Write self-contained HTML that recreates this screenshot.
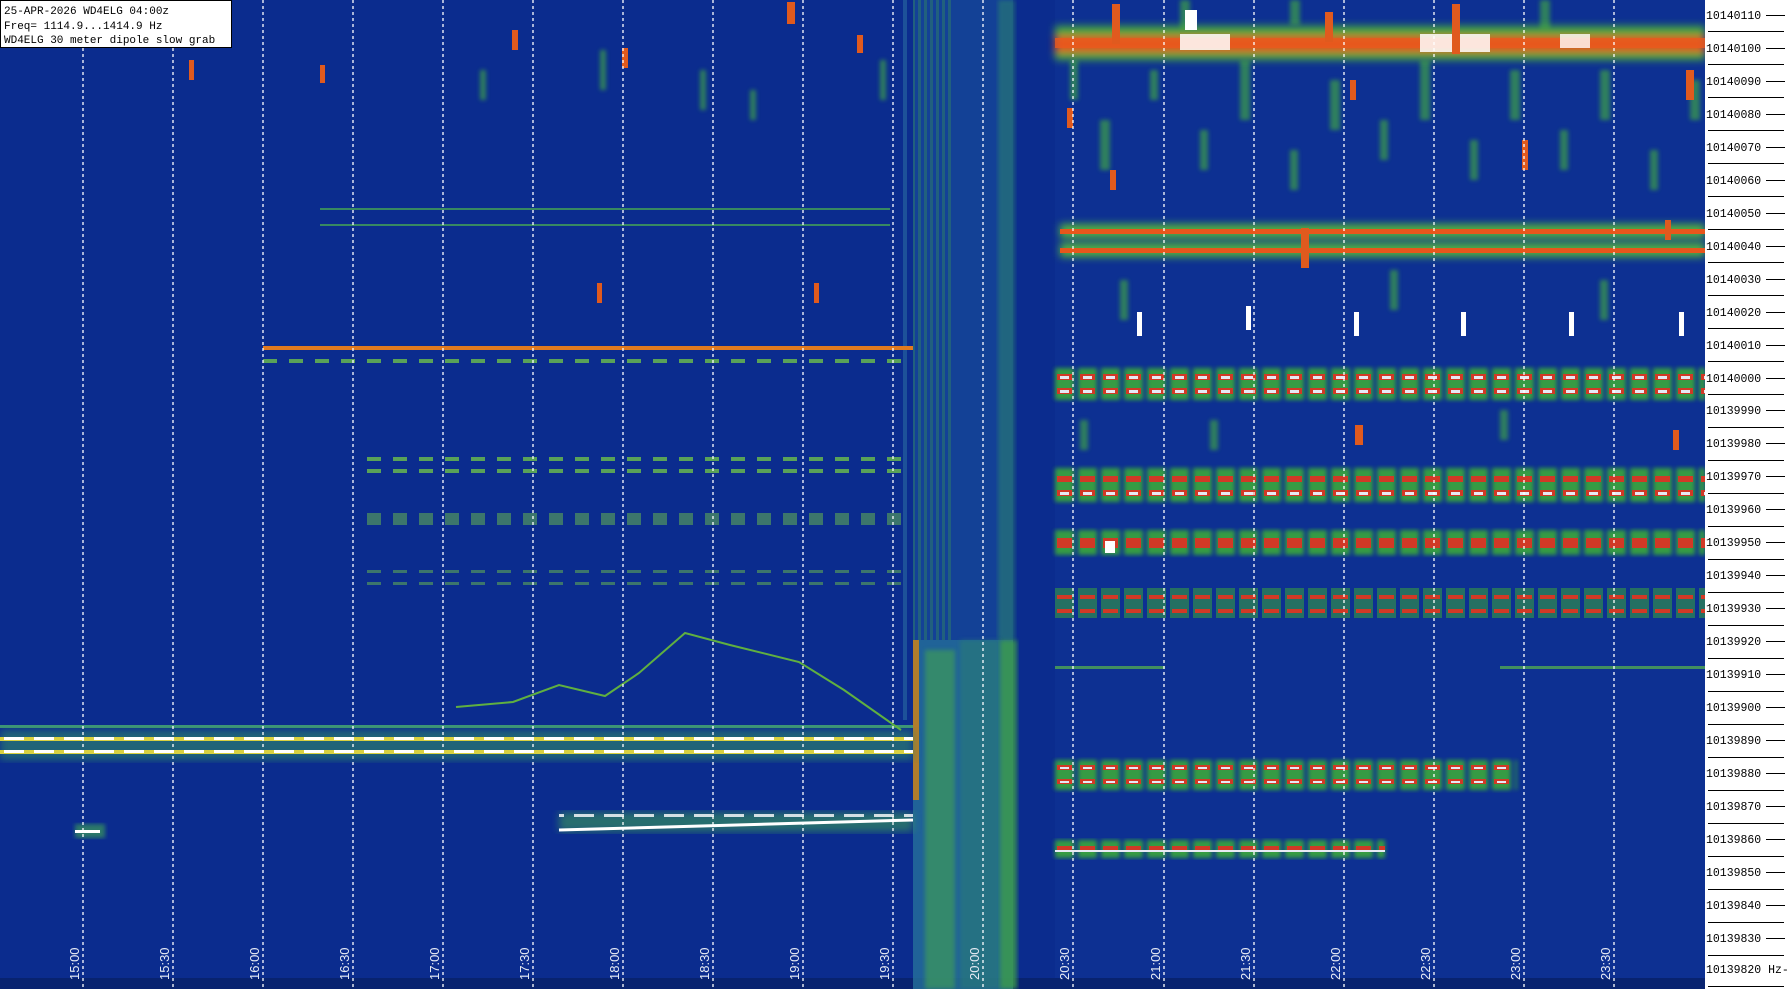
<!DOCTYPE html>
<html><head><meta charset="utf-8"><style>
html,body{margin:0;padding:0;background:#fff;width:1789px;height:989px;overflow:hidden}
svg{display:block}
.mono{font-family:"Liberation Mono",monospace}
</style></head><body>
<svg width="1789" height="989" viewBox="0 0 1789 989" xmlns="http://www.w3.org/2000/svg">
<defs>
<filter id="blur2"><feGaussianBlur stdDeviation="2"/></filter>
<filter id="blur4"><feGaussianBlur stdDeviation="4"/></filter>
<pattern id="dashL" x="0" y="0" width="30" height="30" patternUnits="userSpaceOnUse">
<rect x="4" y="0" width="20" height="30" fill="#fff"/></pattern>
<pattern id="blkR" x="1055" y="0" width="23" height="40" patternUnits="userSpaceOnUse">
<rect x="2" y="0" width="15" height="40" fill="#e83a1a"/></pattern>
<pattern id="blkG" x="1055" y="0" width="23" height="40" patternUnits="userSpaceOnUse">
<rect x="0" y="0" width="19" height="40" fill="#3aa83a"/></pattern>
<pattern id="blkW" x="1055" y="0" width="23" height="40" patternUnits="userSpaceOnUse">
<rect x="5" y="0" width="9" height="40" fill="#fff"/></pattern>
<pattern id="dashS" x="0" y="0" width="26" height="10" patternUnits="userSpaceOnUse">
<rect x="3" y="0" width="14" height="10" fill="#6cc04a"/></pattern>
<pattern id="vstr" x="0" y="0" width="6" height="40" patternUnits="userSpaceOnUse">
<rect x="0" y="0" width="3" height="40" fill="#3a9a50"/></pattern>
</defs>
<rect x="0" y="0" width="1705" height="989" fill="#0b2c8e"/>
<rect x="1055" y="0" width="650" height="989" fill="#0d3092"/>
<rect x="0" y="978" width="1705" height="11" fill="#082370"/>

<!-- green vertical region -->
<rect x="913" y="0" width="100" height="989" fill="#1d5aa0" opacity="0.45"/>
<rect x="913" y="0" width="40" height="640" fill="url(#vstr)" opacity="0.35"/>
<rect x="998" y="0" width="17" height="640" fill="#2e8a6a" opacity="0.5" filter="url(#blur2)"/>
<rect x="913" y="640" width="100" height="349" fill="#2a7a9a" opacity="0.6"/>
<rect x="925" y="650" width="30" height="339" fill="#3c9a5a" opacity="0.7" filter="url(#blur2)"/>
<rect x="960" y="640" width="40" height="349" fill="#2c8070" opacity="0.5" filter="url(#blur2)"/>
<rect x="1000" y="640" width="17" height="349" fill="#3e9e4a" opacity="0.8" filter="url(#blur2)"/>
<rect x="913" y="640" width="6" height="160" fill="#c08020" opacity="0.9"/>
<rect x="903" y="0" width="4" height="720" fill="#2a6aa0" opacity="0.6"/>

<!-- scattered green blobs right -->
<g fill="#3ea048" opacity="0.7" filter="url(#blur2)">
<rect x="1070" y="60" width="8" height="40"/><rect x="1100" y="120" width="10" height="50"/><rect x="1150" y="70" width="8" height="30"/>
<rect x="1200" y="130" width="8" height="40"/><rect x="1240" y="60" width="10" height="60"/><rect x="1290" y="150" width="8" height="40"/>
<rect x="1330" y="80" width="10" height="50"/><rect x="1380" y="120" width="8" height="40"/><rect x="1420" y="60" width="10" height="60"/>
<rect x="1470" y="140" width="8" height="40"/><rect x="1510" y="70" width="10" height="50"/><rect x="1560" y="130" width="8" height="40"/>
<rect x="1600" y="70" width="10" height="50"/><rect x="1650" y="150" width="8" height="40"/><rect x="1690" y="80" width="10" height="40"/>
<rect x="1120" y="280" width="8" height="40"/><rect x="1210" y="420" width="8" height="30"/><rect x="1390" y="270" width="8" height="40"/>
<rect x="1500" y="410" width="8" height="30"/><rect x="1600" y="280" width="8" height="40"/><rect x="1080" y="420" width="8" height="30"/>
<rect x="1180" y="0" width="10" height="30"/><rect x="1290" y="0" width="10" height="25"/><rect x="1540" y="0" width="10" height="30"/>
<rect x="600" y="50" width="6" height="40"/><rect x="700" y="70" width="6" height="40"/><rect x="750" y="90" width="6" height="30"/>
<rect x="480" y="70" width="6" height="30"/><rect x="880" y="60" width="6" height="40"/>
</g>

<!-- top-right band -->
<g filter="url(#blur4)">
<rect x="1055" y="26" width="650" height="34" fill="#48a83c"/>
<rect x="1055" y="36" width="650" height="16" fill="#e0501c"/>
<rect x="1060" y="224" width="645" height="14" fill="#52b040"/>
<rect x="1060" y="243" width="645" height="14" fill="#52b040"/>
</g>
<rect x="1055" y="38" width="650" height="10" fill="#ea5a1e" opacity="0.8"/>
<rect x="1180" y="34" width="50" height="16" fill="#fff" opacity="0.85"/>
<rect x="1420" y="34" width="70" height="18" fill="#fff" opacity="0.85"/>
<rect x="1560" y="34" width="30" height="14" fill="#fff" opacity="0.8"/>
<rect x="1060" y="229" width="645" height="5" fill="#e8561c"/>
<rect x="1060" y="248" width="645" height="5" fill="#e8561c"/>

<!-- right block rows -->
<g opacity="0.9">
<rect x="1055" y="368" width="650" height="32" fill="url(#blkG)" filter="url(#blur2)"/>
<rect x="1055" y="374" width="650" height="6" fill="url(#blkR)"/>
<rect x="1055" y="388" width="650" height="6" fill="url(#blkR)"/>
<rect x="1055" y="376" width="650" height="3" fill="url(#blkW)"/>
<rect x="1055" y="390" width="650" height="3" fill="url(#blkW)"/>
<rect x="1055" y="468" width="650" height="34" fill="url(#blkG)" filter="url(#blur2)"/>
<rect x="1055" y="476" width="650" height="6" fill="url(#blkR)"/>
<rect x="1055" y="490" width="650" height="6" fill="url(#blkR)"/>
<rect x="1055" y="492" width="650" height="3" fill="url(#blkW)"/>
<rect x="1055" y="530" width="650" height="25" fill="url(#blkG)" filter="url(#blur2)"/>
<rect x="1055" y="538" width="650" height="10" fill="url(#blkR)"/>
<rect x="1055" y="588" width="650" height="30" fill="url(#blkG)" opacity="0.6"/>
<rect x="1055" y="595" width="650" height="4" fill="url(#blkR)"/>
<rect x="1055" y="609" width="650" height="4" fill="url(#blkR)"/>
<rect x="1055" y="760" width="462" height="30" fill="url(#blkG)" filter="url(#blur2)"/>
<rect x="1055" y="765" width="462" height="5" fill="url(#blkR)"/>
<rect x="1055" y="779" width="462" height="5" fill="url(#blkR)"/>
<rect x="1055" y="767" width="462" height="2" fill="url(#blkW)"/>
<rect x="1055" y="781" width="462" height="2" fill="url(#blkW)"/>
<rect x="1055" y="840" width="330" height="18" fill="url(#blkG)" filter="url(#blur2)"/>
<rect x="1055" y="846" width="330" height="5" fill="url(#blkR)"/>
<rect x="1055" y="850" width="330" height="2" fill="#fff"/>
</g>
<rect x="1055" y="666" width="110" height="3" fill="#5ab84a" opacity="0.7"/>
<rect x="1500" y="666" width="205" height="3" fill="#5ab84a" opacity="0.7"/>

<!-- left rows -->
<rect x="320" y="208" width="570" height="2" fill="#4ab050" opacity="0.7"/>
<rect x="320" y="224" width="570" height="2" fill="#4ab050" opacity="0.7"/>
<rect x="263" y="346" width="650" height="4" fill="#e07a20"/>
<rect x="263" y="359" width="650" height="4" fill="url(#dashS)" opacity="0.8"/>
<rect x="360" y="457" width="553" height="4" fill="url(#dashS)" opacity="0.8"/>
<rect x="360" y="469" width="553" height="4" fill="url(#dashS)" opacity="0.8"/>
<rect x="360" y="513" width="553" height="12" fill="url(#dashS)" opacity="0.5"/>
<rect x="360" y="570" width="553" height="3" fill="url(#dashS)" opacity="0.5"/>
<rect x="360" y="582" width="553" height="3" fill="url(#dashS)" opacity="0.5"/>

<!-- main left band -->
<rect x="0" y="725" width="913" height="3" fill="#4ab070" opacity="0.8"/>
<rect x="0" y="730" width="913" height="30" fill="#2e8a6a" opacity="0.6" filter="url(#blur4)"/>
<rect x="0" y="737" width="913" height="4" fill="#d8d040"/>
<rect x="0" y="750" width="913" height="4" fill="#d8d040"/>
<rect x="0" y="737" width="913" height="3" fill="url(#dashL)"/>
<rect x="0" y="750" width="913" height="3" fill="url(#dashL)"/>

<!-- lower left line -->
<rect x="559" y="812" width="354" height="20" fill="#3a9a5a" opacity="0.6" filter="url(#blur4)"/>
<line x1="559" y1="830" x2="913" y2="820" stroke="#fff" stroke-width="3"/>
<rect x="559" y="814" width="354" height="3" fill="url(#dashL)" opacity="0.8"/>
<rect x="75" y="824" width="30" height="14" fill="#3a9a5a" opacity="0.7" filter="url(#blur2)"/>
<rect x="75" y="830" width="25" height="3" fill="#fff"/>

<!-- curve -->
<polyline points="456,707 513,702 559,685 605,696 639,673 685,633 730,645 799,662 844,690 901,730" fill="none" stroke="#60b040" stroke-width="2"/>

<!-- scattered blobs -->
<g fill="#e05a1e">
<rect x="512" y="30" width="6" height="20"/><rect x="787" y="2" width="8" height="22"/><rect x="857" y="35" width="6" height="18"/>
<rect x="189" y="60" width="5" height="20"/><rect x="320" y="65" width="5" height="18"/><rect x="622" y="48" width="6" height="20"/>
<rect x="1067" y="108" width="6" height="20"/><rect x="1112" y="4" width="8" height="40"/><rect x="1325" y="12" width="8" height="30"/>
<rect x="1452" y="4" width="8" height="50"/><rect x="1686" y="70" width="8" height="30"/><rect x="1350" y="80" width="6" height="20"/>
<rect x="1301" y="228" width="8" height="40"/><rect x="1110" y="170" width="6" height="20"/><rect x="1522" y="140" width="6" height="30"/>
<rect x="1665" y="220" width="6" height="20"/><rect x="1673" y="430" width="6" height="20"/><rect x="1355" y="425" width="8" height="20"/>
<rect x="597" y="283" width="5" height="20"/><rect x="814" y="283" width="5" height="20"/>
</g>
<g fill="#fff">
<rect x="1137" y="312" width="5" height="24"/><rect x="1246" y="306" width="5" height="24"/><rect x="1354" y="312" width="5" height="24"/>
<rect x="1461" y="312" width="5" height="24"/><rect x="1569" y="312" width="5" height="24"/><rect x="1679" y="312" width="5" height="24"/>
<rect x="1185" y="10" width="12" height="20"/><rect x="1105" y="541" width="10" height="12"/>
</g>

<!-- dashed time lines -->
<g stroke="#fff" stroke-width="1.3" stroke-dasharray="3,3">
<line x1="83" y1="0" x2="83" y2="989"/><line x1="173" y1="0" x2="173" y2="989"/><line x1="263" y1="0" x2="263" y2="989"/>
<line x1="353" y1="0" x2="353" y2="989"/><line x1="443" y1="0" x2="443" y2="989"/><line x1="533" y1="0" x2="533" y2="989"/>
<line x1="623" y1="0" x2="623" y2="989"/><line x1="713" y1="0" x2="713" y2="989"/><line x1="803" y1="0" x2="803" y2="989"/>
<line x1="893" y1="0" x2="893" y2="989"/><line x1="983" y1="0" x2="983" y2="989"/><line x1="1073" y1="0" x2="1073" y2="989"/>
<line x1="1164" y1="0" x2="1164" y2="989"/><line x1="1254" y1="0" x2="1254" y2="989"/><line x1="1344" y1="0" x2="1344" y2="989"/>
<line x1="1434" y1="0" x2="1434" y2="989"/><line x1="1524" y1="0" x2="1524" y2="989"/><line x1="1614" y1="0" x2="1614" y2="989"/>
</g>
<g fill="#e8ecf4" font-family="Liberation Sans, sans-serif" font-size="13">
<text transform="translate(79,980) rotate(-90)">15:00</text>
<text transform="translate(169,980) rotate(-90)">15:30</text>
<text transform="translate(259,980) rotate(-90)">16:00</text>
<text transform="translate(349,980) rotate(-90)">16:30</text>
<text transform="translate(439,980) rotate(-90)">17:00</text>
<text transform="translate(529,980) rotate(-90)">17:30</text>
<text transform="translate(619,980) rotate(-90)">18:00</text>
<text transform="translate(709,980) rotate(-90)">18:30</text>
<text transform="translate(799,980) rotate(-90)">19:00</text>
<text transform="translate(889,980) rotate(-90)">19:30</text>
<text transform="translate(979,980) rotate(-90)">20:00</text>
<text transform="translate(1069,980) rotate(-90)">20:30</text>
<text transform="translate(1160,980) rotate(-90)">21:00</text>
<text transform="translate(1250,980) rotate(-90)">21:30</text>
<text transform="translate(1340,980) rotate(-90)">22:00</text>
<text transform="translate(1430,980) rotate(-90)">22:30</text>
<text transform="translate(1520,980) rotate(-90)">23:00</text>
<text transform="translate(1610,980) rotate(-90)">23:30</text>
</g>

<!-- info box -->
<rect x="0.5" y="0.5" width="231" height="47" fill="#fff" stroke="#000"/>
<g class="mono" font-size="11" fill="#000">
<text x="4" y="14">25-APR-2026  WD4ELG  04:00z</text>
<text x="4" y="29">Freq= 1114.9...1414.9 Hz</text>
<text x="4" y="43">WD4ELG 30 meter dipole slow grab</text>
</g>

<!-- axis -->
<rect x="1705" y="0" width="84" height="989" fill="#fff"/>
<g class="mono" font-size="11.5" fill="#000">
<text x="1706" y="19">10140110</text><text x="1706" y="52">10140100</text><text x="1706" y="85">10140090</text>
<text x="1706" y="118">10140080</text><text x="1706" y="151">10140070</text><text x="1706" y="184">10140060</text>
<text x="1706" y="217">10140050</text><text x="1706" y="250">10140040</text><text x="1706" y="283">10140030</text>
<text x="1706" y="316">10140020</text><text x="1706" y="349">10140010</text><text x="1706" y="382">10140000</text>
<text x="1706" y="414">10139990</text><text x="1706" y="447">10139980</text><text x="1706" y="480">10139970</text>
<text x="1706" y="513">10139960</text><text x="1706" y="546">10139950</text><text x="1706" y="579">10139940</text>
<text x="1706" y="612">10139930</text><text x="1706" y="645">10139920</text><text x="1706" y="678">10139910</text>
<text x="1706" y="711">10139900</text><text x="1706" y="744">10139890</text><text x="1706" y="777">10139880</text>
<text x="1706" y="810">10139870</text><text x="1706" y="843">10139860</text><text x="1706" y="876">10139850</text>
<text x="1706" y="909">10139840</text><text x="1706" y="942">10139830</text><text x="1706" y="973">10139820 Hz-</text>
</g>
<g stroke="#000" stroke-width="1">
<path d="M1766 15.5H1785M1766 48.5H1785M1766 81.5H1785M1766 114.5H1785M1766 147.5H1785M1766 180.5H1785M1766 213.5H1785M1766 246.5H1785M1766 279.5H1785M1766 312.5H1785M1766 345.5H1785M1766 378.5H1785M1766 410.5H1785M1766 443.5H1785M1766 476.5H1785M1766 509.5H1785M1766 542.5H1785M1766 575.5H1785M1766 608.5H1785M1766 641.5H1785M1766 674.5H1785M1766 707.5H1785M1766 740.5H1785M1766 773.5H1785M1766 806.5H1785M1766 839.5H1785M1766 872.5H1785M1766 905.5H1785M1766 938.5H1785"/>
<path d="M1708 31.5H1784M1708 64.5H1784M1708 97.5H1784M1708 130.5H1784M1708 163.5H1784M1708 196.5H1784M1708 229.5H1784M1708 262.5H1784M1708 295.5H1784M1708 328.5H1784M1708 361.5H1784M1708 394.5H1784M1708 427.5H1784M1708 460.5H1784M1708 493.5H1784M1708 526.5H1784M1708 559.5H1784M1708 592.5H1784M1708 625.5H1784M1708 658.5H1784M1708 691.5H1784M1708 724.5H1784M1708 757.5H1784M1708 790.5H1784M1708 823.5H1784M1708 856.5H1784M1708 889.5H1784M1708 922.5H1784M1708 955.5H1784M1708 986.5H1784"/>
</g>
</svg>
</body></html>
